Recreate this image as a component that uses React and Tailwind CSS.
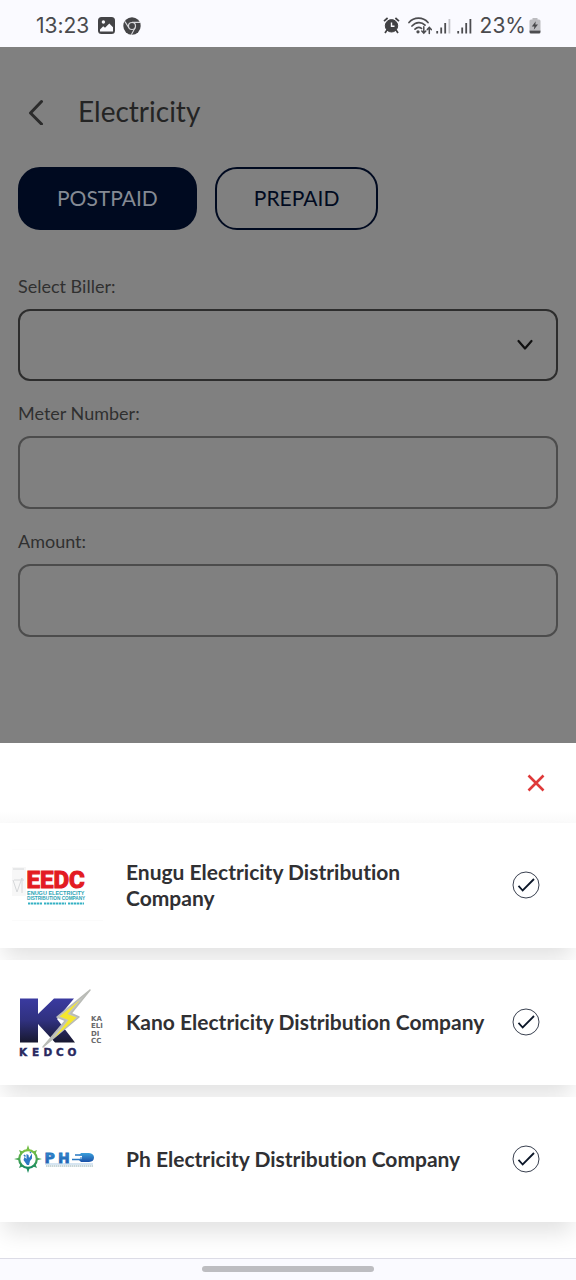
import React from "react";

function StatusBar() {
  return (
    <header className="flex h-[47px] items-center bg-[#fafaff] pt-1 pl-9 pr-[35px] font-['Inter',sans-serif] text-[21px] leading-6 text-[#4a4a4d]">
      <span>13:23</span>
      <svg className="ml-[9px] h-[17px] w-[17px]" viewBox="0 0 17 17" aria-hidden="true">
        <rect width="17" height="17" rx="3.5" fill="#444447" />
        <path d="M2 12.5 5.2 9.3 7 10.8 11.3 6.5 15 10.2V14.5H2Z" fill="#fafaff" />
        <circle cx="5.4" cy="5" r="1.7" fill="#fafaff" />
      </svg>
      <svg className="ml-2 h-[18px] w-[18px]" viewBox="0 0 18 18" aria-hidden="true">
        <circle cx="9" cy="9" r="8.7" fill="#444447" />
        <circle cx="9" cy="9" r="3.5" fill="none" stroke="#d8d8dc" strokeWidth="1.2" />
        <path d="M9 5.4H17M5.8 10.8 2 4.6M12.1 10.8 8.3 17.7" stroke="#d8d8dc" strokeWidth="1.1" />
      </svg>
      <div className="ml-auto flex items-center">
        <svg className="h-[17px] w-[17px]" viewBox="0 0 17 17" fill="none" stroke="#414144" aria-hidden="true">
          <circle cx="8.5" cy="8.8" r="6.2" fill="#414144" />
          <path d="M1 4.2 4.6 1M16 4.2 12.4 1" strokeWidth="1.7" />
          <path d="m4 13-2 3M13 13l2 3" strokeWidth="1.7" />
          <path d="M8.5 5.4v3.8h3" stroke="#fafaff" strokeWidth="1.4" />
        </svg>
        <svg className="ml-2 h-[18px] w-6" viewBox="0 0 24 18" fill="none" stroke="#4d4d50" strokeWidth="1.7" strokeLinecap="round" aria-hidden="true">
          <path d="M1 5.5C6-.3 15-.3 20 5.5M4 9c4-4.4 9.5-4.4 13-.8M7 12.2c2-2.1 4.4-2.3 6.5-.8" />
          <circle cx="10" cy="14.8" r=".8" fill="#4d4d50" />
          <path d="M15.8 9.7v6M13.8 14l2 2.2 2-2.2M21.3 16.5v-5.8M19.3 12.6l2-2.2 2 2.2" strokeWidth="1.5" />
        </svg>
        <svg className="ml-1 h-4 w-[15px]" viewBox="0 0 15 16" aria-hidden="true">
          <path d="M1.2 13v2.5M5.2 9.5v6M9.2 5v10.5" stroke="#4d4d50" strokeWidth="1.8" />
          <path d="M13.4 1v14.5" stroke="#c2c2c7" strokeWidth="1.8" />
        </svg>
        <svg className="ml-[6px] h-4 w-[15px]" viewBox="0 0 15 16" aria-hidden="true">
          <path d="M1.2 13v2.5M5.2 9.5v6M9.2 5v10.5M13.4 1v14.5" stroke="#4d4d50" strokeWidth="1.8" />
        </svg>
        <span className="ml-2">23%</span>
        <svg className="ml-[3px] h-4 w-3" viewBox="0 0 12 16" aria-hidden="true">
          <path d="M3.5 0h5v1.5H10q1.5 0 1.5 1.5v9.5H.5V3q0-1.5 1.5-1.5h1.5Z" fill="#bcbcc0" />
          <path d="M.5 12.5h11V14q0 1.5-1.5 1.5H2Q.5 15.500.5 14Z" fill="#4d4d50" />
          <path d="M6.8 3.2 2.8 8.4h2.6l-.6 3.400 4.200-5.300H6.300Z" fill="#48484b" />
        </svg>
      </div>
    </header>
  );
}

function EedcLogo() {
  return (
    <svg className="h-[72px] w-[91px] shrink-0" viewBox="0 0 91 72" role="img" aria-label="EEDC logo">
      <path d="M0 0h91M0 71.500h91" stroke="#fbfbfb" />
      <path d="M0 18h14v29H0Z" fill="#f7f7f7" />
      <path d="M1 20h11M1 31l4 12 5-14v15M2 31h10" fill="none" stroke="#d6d8da" strokeWidth="1" />
      <text x="14.500" y="39" fontFamily="Roboto, sans-serif" fontWeight="700" fontSize="24" fill="#e31b23" stroke="#e31b23" strokeWidth="1.200">EEDC</text>
      <g fontFamily="Liberation Sans, sans-serif" fontWeight="700" fill="#2aa3b4">
        <text x="15" y="45.500" fontSize="5.500">ENUGU ELECTRICITY</text>
        <text x="15" y="51" fontSize="4.700">DISTRIBUTION COMPANY</text>
      </g>
      <path d="M16 54.500h14M32 54.500h22M56 54.500h16" stroke="#35b1c4" strokeWidth="1.800" strokeDasharray="2.400 .6" />
    </svg>
  );
}

function KedcoLogo() {
  return (
    <svg className="h-[72px] w-[91px] shrink-0" viewBox="0 0 91 72" role="img" aria-label="KEDCO logo">
      <defs>
        <linearGradient id="kedco-k" x1="0" y1="0" x2="0" y2="1">
          <stop offset="0" stopColor="#3a3aa0" />
          <stop offset=".5" stopColor="#30317f" />
          <stop offset="1" stopColor="#17182f" />
        </linearGradient>
      </defs>
      <path d="M8 12.500H26V28L42 12.500H62L45 33 63 56.500H43L26 38V56.500H8Z" fill="url(#kedco-k)" />
      <path d="M78 4 45 31l8.500 3.500L31 61 67 31l-8-3.500Z" fill="#c3c5c1" stroke="#b9bbb6" strokeWidth="1.500" strokeLinejoin="round" />
      <path d="M68 14 47.500 30.500l9 3.500L42 52 64.500 31.500 55.500 28Z" fill="#f5e72e" />
      <g fontFamily="DejaVu Sans, sans-serif" fontWeight="700">
        <text x="7 20 31.500 44 55.500" y="70" fontSize="10.500" fill="#29295f" stroke="#29295f" strokeWidth=".4">KEDCO</text>
        <g fontSize="7" fill="#68686b">
          <text x="79" y="35">KA</text>
          <text x="79" y="42">ELI</text>
          <text x="79" y="50">DI</text>
          <text x="79" y="57">CC</text>
        </g>
      </g>
    </svg>
  );
}

function PhedLogo() {
  return (
    <svg className="h-[72px] w-[91px] shrink-0" viewBox="0 0 91 72" role="img" aria-label="PHED logo">
      <defs>
        <linearGradient id="phed-ring" x1="0" y1="0" x2="0" y2="1">
          <stop offset="0" stopColor="#7cc242" />
          <stop offset="1" stopColor="#178a62" />
        </linearGradient>
        <linearGradient id="phed-word" x1="0" y1="0" x2="0" y2="1">
          <stop offset="0" stopColor="#3aa0dc" />
          <stop offset="1" stopColor="#1a50a8" />
        </linearGradient>
      </defs>
      <path d="m16 22 2 6h-4ZM16 50l2-6h-4ZM2 36l6-1.500v3ZM30 36l-6-1.500v3ZM7 27l5 2-3 3ZM25 27l-5 2 3 3ZM7 45l5-2-3-3ZM25 45l-5-2 3-3Z" fill="url(#phed-ring)" />
      <circle cx="16" cy="36" r="8.800" fill="#fff" stroke="url(#phed-ring)" strokeWidth="2.200" />
      <path d="m15 42-3.500-5 1-3 2 2V31l2 1 .5 3 3-4.500v5L18 38l-1 4Z" fill="#2d78c4" />
      <path d="m12 32 1.500 1.500M18 30l1-1" stroke="#2d78c4" strokeWidth="1.500" />
      <text x="32.500 46" y="39.500" fontFamily="DejaVu Sans, sans-serif" fontWeight="700" fontSize="14" fill="url(#phed-word)" stroke="#2671bd" strokeWidth=".8">PH</text>
      <path d="M63 32h7M60 36.500h11" stroke="#2878c2" strokeWidth="1.600" />
      <path d="M69 30h8q5 .5 5 4.500t-5 4.500h-8l-2-2h3v-1.500h-2v-1h2V32.500h-3Z" fill="url(#phed-word)" />
      <path d="M33 41h48" stroke="#8ab5d8" strokeWidth=".7" />
      <path d="M34 43h47" stroke="#91aeb3" strokeWidth="1.200" strokeDasharray="1.500 .5" />
    </svg>
  );
}

const billers = [
  { name: "Enugu Electricity Distribution Company", Logo: EedcLogo },
  { name: "Kano Electricity Distribution Company", Logo: KedcoLogo },
  { name: "Ph Electricity Distribution Company", Logo: PhedLogo },
];

function BillerCard({ name, Logo }) {
  return (
    <li>
      <button
        type="button"
        className="relative flex h-[125px] w-full items-center bg-white pb-[2px] pl-3 pr-9 text-left shadow-[0_14px_22px_-4px_rgba(0,0,0,0.12)]"
      >
        <Logo />
        <span className="ml-[23px] flex-1 text-[21px] leading-[26px] font-bold text-[#303033]">{name}</span>
        <svg className="ml-[22px] h-7 w-7 shrink-0" viewBox="0 0 28 28" fill="none" aria-hidden="true">
          <circle cx="14" cy="14" r="13" stroke="#3a4150" strokeWidth="1" />
          <path d="m6.500 14.800 4.200 4.700L22 8" stroke="#0b1628" strokeWidth="1.800" />
        </svg>
      </button>
    </li>
  );
}

function Field({ id, label, children }) {
  return (
    <div>
      <label htmlFor={id} className="mb-[11px] block text-[18px] leading-6 text-[#303030]">
        {label}
      </label>
      {children}
    </div>
  );
}

export default function App() {
  return (
    <div className="flex min-h-screen flex-col bg-white font-['Lato',sans-serif] [font-variant-ligatures:none]">
      <StatusBar />
      <main className="h-[696px] bg-[#808080] px-[18px] pt-11">
        <div className="flex items-center">
          <button type="button" aria-label="Back" className="flex h-10 w-9 items-center justify-center">
            <svg className="h-7 w-4" viewBox="0 0 16 28" fill="none" stroke="#2b2b2b" strokeWidth="3" strokeLinecap="round" strokeLinejoin="round">
              <path d="M13.500 4.500 2.500 16l11 11" />
            </svg>
          </button>
          <h1 className="ml-6 text-[28px] leading-10 text-[#242424]">Electricity</h1>
        </div>
        <div className="mt-9 flex gap-[18px]">
          <button type="button" className="h-[63px] rounded-[22px] border-2 border-[#000a20] bg-[#000a20] px-[37px] pb-[2px] text-[21px] text-[#858a94]">
            POSTPAID
          </button>
          <button type="button" className="h-[63px] rounded-[22px] border-2 border-[#000a20] px-[37px] pb-[2px] text-[21px] text-[#000a20]">
            PREPAID
          </button>
        </div>
        <form className="mt-11 flex flex-col gap-5">
          <Field id="biller" label="Select Biller:">
            <div className="relative">
              <select id="biller" className="block h-[72px] w-full appearance-none rounded-xl border-2 border-[#2d2d2d] bg-transparent px-5 text-[18px]">
                <option value=""></option>
              </select>
              <svg className="pointer-events-none absolute top-[30px] right-6 h-3 w-[18px]" viewBox="0 0 18 12" fill="none" stroke="#111" strokeWidth="2.200" strokeLinecap="round" strokeLinejoin="round" aria-hidden="true">
                <path d="m2.500 2 6.500 7.500L15.500 2" />
              </svg>
            </div>
          </Field>
          <Field id="meter" label="Meter Number:">
            <input id="meter" type="text" className="block h-[73px] w-full rounded-xl border-2 border-[#4c4c4c] bg-transparent px-5 text-[18px]" />
          </Field>
          <Field id="amount" label="Amount:">
            <input id="amount" type="text" className="block h-[73px] w-full rounded-xl border-2 border-[#4c4c4c] bg-transparent px-5 text-[18px]" />
          </Field>
        </form>
      </main>
      <section aria-label="Billers" className="flex-1">
        <div className="flex h-20 items-center justify-end bg-linear-to-b from-white from-85% to-[#fafafa] pr-[26px]">
          <button type="button" aria-label="Close" className="flex h-7 w-7 items-center justify-center">
            <svg className="h-[18px] w-[18px]" viewBox="0 0 18 18" fill="none" stroke="#df3939" strokeWidth="2.600">
              <path d="m1.500 1.500 15 15M16.500 1.500l-15 15" />
            </svg>
          </button>
        </div>
        <ul className="flex flex-col gap-3">
          {billers.map((biller) => (
            <BillerCard key={biller.name} {...biller} />
          ))}
        </ul>
      </section>
      <footer className="relative flex h-[22px] items-center justify-center border-t border-[#dcdce6] bg-[#fafaff] pb-[2px]">
        <div className="h-[6px] w-[30%] rounded-full bg-[#bdbdc1]" />
      </footer>
    </div>
  );
}
